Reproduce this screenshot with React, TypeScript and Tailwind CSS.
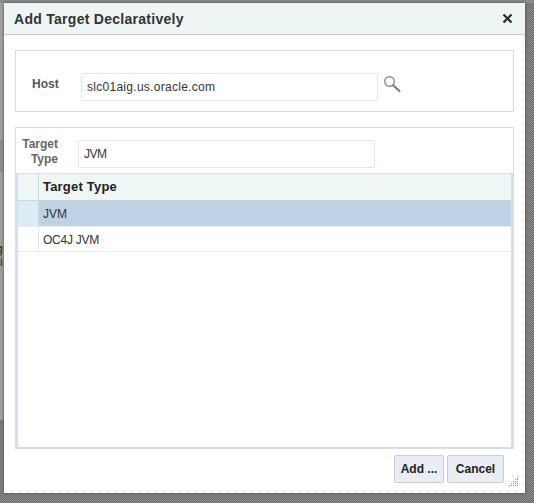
import React from "react";

function Grip() {
  const dots: [number, number][] = [
    [8, 0], [6, 2], [8, 2], [4, 4], [6, 4], [8, 4], [2, 6], [4, 6], [6, 6], [8, 6], [0, 8], [2, 8], [4, 8], [6, 8], [8, 8],
  ];
  return (
    <svg width="10" height="10" viewBox="0 0 10 10" className="block">
      {dots.map(([x, y], i) => (
        <rect key={i} x={x} y={y} width="1" height="1" fill="#8a9090" />
      ))}
    </svg>
  );
}

function SearchIcon() {
  return (
    <svg width="18" height="18" viewBox="0 0 18 18" className="block">
      <circle cx="6.5" cy="6.5" r="4.8" fill="#fdfdfd" stroke="#8c8c8c" strokeWidth="1.4" />
      <path d="M10.2 10.2 L16.4 16" stroke="#7f7f7f" strokeWidth="2.2" strokeLinecap="round" />
    </svg>
  );
}

export default function App() {
  return (
    <div className="relative w-[534px] h-[503px] overflow-hidden bg-[conic-gradient(#6e6e6e_25%,#8a8a8a_0_50%,#6e6e6e_0_75%,#8a8a8a_0)] bg-[length:2px_2px] pl-[4px] pt-[3px] font-['Liberation_Sans',Arial,sans-serif]">
      <div className="absolute left-0 top-0 w-[4px] h-[420px] bg-[#a2a2a2]" />
      <div className="absolute left-0 top-0 w-[534px] h-[3px] bg-[#8c8c8c]" />
      <div className="absolute left-0 top-[140px] w-[4px] h-[32px] bg-[#8e8e8e]" />
      <div className="absolute left-[-4px] top-[243px] text-[12px] leading-[13px] text-[#222]">
        <div>g</div>
        <div>ri</div>
      </div>
      <div className="relative w-[521px] h-[490px] bg-white flex flex-col shadow-[0_0_3px_#4a4a4a]">
        <div className="h-[32px] shrink-0 bg-[#edf5f5] border-b border-[#c6cfcf] flex items-center justify-between pl-[10px] pr-[12px]">
          <span className="text-[14px] leading-none font-bold text-[#333] tracking-[0.28px]">Add Target Declaratively</span>
          <svg width="11" height="11" viewBox="0 0 11 11" className="block">
            <path d="M1.5 1.5 L9.5 9.5 M9.5 1.5 L1.5 9.5" stroke="#2b2b2b" strokeWidth="2.2" />
          </svg>
        </div>

        <div className="ml-[11px] mr-[11px] mt-[15px] h-[62px] shrink-0 border border-[#d3dede] flex items-start pt-[22px] pl-[16px]">
          <span className="w-[49px] text-[12px] font-bold text-[#555] mt-[2px]">Host</span>
          <div className="w-[297px] h-[28px] border border-[#e6e2ea] rounded-[2px] flex items-center pl-[5px] text-[12px] tracking-[0.28px] text-[#333]">
            slc01aig.us.oracle.com
          </div>
          <div className="ml-[5px] mt-[2px]"><SearchIcon /></div>
        </div>

        <div className="ml-[11px] mr-[11px] mt-[15px] h-[322px] shrink-0 border-t border-x border-[#d6e0e6] flex flex-col">
          <div className="h-[45px] shrink-0 flex items-start">
            <span className="w-[42px] pl-[1px] mt-[9px] text-[12px] leading-[15px] font-bold text-[#666] text-right">Target Type</span>
            <div className="ml-[20px] mt-[12px] w-[297px] h-[28px] border border-[#e6e2ea] rounded-[2px] flex items-center pl-[5px] text-[12px] tracking-[-0.5px] text-[#333]">
              JVM
            </div>
          </div>
          <div className="flex-1 border-x-2 border-b-2 border-t border-[#d5e0e8] flex flex-col text-[12px] text-[#333]">
            <div className="h-[27px] shrink-0 flex bg-[#eef6f6] border-b border-[#c9d6e0]">
              <div className="w-[21px] border-r border-[#cfdbe3]" />
              <div className="pl-[4px] font-bold text-[13px] tracking-[0.2px] text-[#222] flex items-center">Target Type</div>
            </div>
            <div className="h-[25px] shrink-0 flex">
              <div className="w-[21px] bg-[#dcebf4] border-r border-[#cfdbe3]" />
              <div className="flex-1 bg-[#bdd3e5] pl-[4px] flex items-center">JVM</div>
            </div>
            <div className="h-[26px] shrink-0 flex border-t border-b border-[#e9eef0]">
              <div className="w-[21px] border-r border-[#d9e3ea]" />
              <div className="flex-1 pl-[4px] pt-[2px] tracking-[-0.25px] flex items-center">OC4J JVM</div>
            </div>
          </div>
        </div>

        <div className="relative flex-1 flex justify-end items-start pt-[6px] pr-[21px] gap-[3px]">
          <button className="w-[50px] h-[28px] bg-[#e8eef4] border border-[#c9cdd2] rounded-[2px] text-[12px] font-bold text-[#222]">Add ...</button>
          <button className="w-[57px] h-[28px] bg-[#e8eef4] border border-[#c9cdd2] rounded-[2px] text-[12px] font-bold text-[#222]">Cancel</button>
          <div className="absolute right-[6px] bottom-[6px]"><Grip /></div>
        </div>
      </div>
    </div>
  );
}
